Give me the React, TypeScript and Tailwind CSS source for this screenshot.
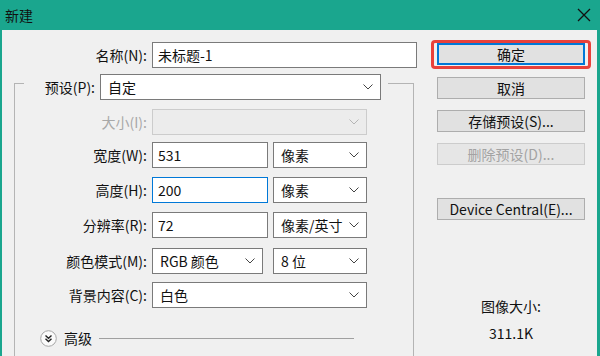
import React from 'react';

const font = { fontFamily: '"Noto Sans CJK SC", "Noto Sans", sans-serif' };

function Chevron({ color = '#444' }: { color?: string }) {
  return (
    <svg width="10" height="6" viewBox="0 0 10 6" className="shrink-0">
      <polyline points="0.5,0.5 5,5 9.5,0.5" fill="none" stroke={color} strokeWidth="1" />
    </svg>
  );
}

function Field({ value, w, focus }: { value: string; w: string; focus?: boolean }) {
  return (
    <div
      className={`${w} h-[26px] bg-white border flex items-center pl-[5px] text-[14px] leading-none ${
        focus ? 'border-[#0078d7]' : 'border-[#7a7a7a]'
      }`}
    >
      {value}
    </div>
  );
}

function Select({ value, w, disabled }: { value: string; w: string; disabled?: boolean }) {
  return (
    <div
      className={`${w} h-[26px] border flex items-center justify-between pl-[7px] pr-[7px] text-[14px] leading-none ${
        disabled ? 'bg-[#ececec] border-[#cccccc]' : 'bg-white border-[#7a7a7a]'
      }`}
    >
      <span>{value}</span>
      <Chevron color={disabled ? '#b5b5b5' : '#444'} />
    </div>
  );
}

function Row({ label, children, mt, disabled }: { label: string; children: React.ReactNode; mt: string; disabled?: boolean }) {
  return (
    <div className={`flex items-center ${mt}`}>
      <div className={`w-[132px] text-right text-[14px] leading-none ${disabled ? 'text-[#a8a8a8]' : 'text-[#111]'}`}>
        {label}
      </div>
      <div className="ml-[5px] flex items-center gap-[5px]">{children}</div>
    </div>
  );
}

function Btn({ label, mt, disabled }: { label: string; mt: string; disabled?: boolean }) {
  return (
    <div
      className={`${mt} mx-[6px] h-[22px] border flex items-center justify-center text-[14px] leading-none ${
        disabled ? 'bg-[#e6e6e6] border-[#cccccc] text-[#a3a3a3]' : 'bg-[#e1e1e1] border-[#adadad] text-[#111]'
      }`}
    >
      {label}
    </div>
  );
}

export default function App() {
  return (
    <div className="w-[600px] h-[356px] bg-[#1aa68e] flex flex-col overflow-hidden text-[#111]" style={font}>
      {/* Title bar */}
      <div className="h-[30px] flex items-center justify-between pl-[5px] pr-[9px] shrink-0">
        <span className="text-[14px] leading-none text-[#111]">新建</span>
        <svg width="14" height="14" viewBox="0 0 14 14">
          <path d="M1 1 L13 13 M13 1 L1 13" stroke="#111" strokeWidth="1.3" />
        </svg>
      </div>

      {/* Body */}
      <div className="flex-1 ml-[2px] mr-[3px] bg-[#f0f0f0] flex">
        {/* Left pane */}
        <div className="w-[418px] flex flex-col">
          <div className="flex items-center mt-[12px]">
            <div className="w-[145px] text-right text-[14px] leading-none">名称(N):</div>
            <div className="ml-[5px]">
              <Field value="未标题-1" w="w-[265px]" />
            </div>
          </div>

          {/* Group box */}
          <div className="mt-[15px] ml-[12px] w-[400px] flex-1 border-l border-t border-r border-[#b4b4b4] flex flex-col">
            <div className="-mt-[11px] ml-[9px] w-[364px] h-[27px] bg-[#f0f0f0] flex items-center justify-end pr-[7px]">
              <span className="text-[14px] leading-none">预设(P):</span>
              <div className="ml-[5px]">
                <Select value="自定" w="w-[281px]" />
              </div>
            </div>

            <Row label="大小(I):" mt="mt-[9px]" disabled>
              <Select value="" w="w-[215px]" disabled />
            </Row>
            <Row label="宽度(W):" mt="mt-[7px]">
              <Field value="531" w="w-[116px]" />
              <Select value="像素" w="w-[94px]" />
            </Row>
            <Row label="高度(H):" mt="mt-[9px]">
              <Field value="200" w="w-[116px]" focus />
              <Select value="像素" w="w-[94px]" />
            </Row>
            <Row label="分辨率(R):" mt="mt-[9px]">
              <Field value="72" w="w-[116px]" />
              <Select value="像素/英寸" w="w-[94px]" />
            </Row>
            <Row label="颜色模式(M):" mt="mt-[10px]">
              <Select value="RGB 颜色" w="w-[111px]" />
              <div className="w-0" />
              <Select value="8 位" w="w-[94px]" />
            </Row>
            <Row label="背景内容(C):" mt="mt-[8px]">
              <Select value="白色" w="w-[215px]" />
            </Row>

            {/* Advanced */}
            <div className="mt-[21px] ml-[25px] flex items-center h-[18px]">
              <svg width="17" height="17" viewBox="0 0 17 17">
                <circle cx="8.5" cy="8.5" r="7.8" fill="#fafafa" stroke="#a6a6a6" strokeWidth="1" />
                <polyline points="5.5,5.5 8.5,8.3 11.5,5.5" fill="none" stroke="#222" strokeWidth="1.4" />
                <polyline points="5.5,8.8 8.5,11.6 11.5,8.8" fill="none" stroke="#222" strokeWidth="1.4" />
              </svg>
              <span className="ml-[7px] text-[14px] leading-none">高级</span>
              <div className="ml-[7px] w-[255px] h-px bg-[#a0a0a0]" />
            </div>
          </div>
        </div>

        {/* Right pane */}
        <div className="ml-[11px] w-[160px] flex flex-col">
          <div className="mt-[10px] border-[3px] border-[#e8413b] rounded-[4px] px-[3px] pb-[1px]">
            <div className="h-[22px] bg-[#e1e1e1] border-2 border-[#0078d7] flex items-center justify-center text-[14px] leading-none">
              确定
            </div>
          </div>
          <Btn label="取消" mt="mt-[8px]" />
          <Btn label="存储预设(S)..." mt="mt-[11px]" />
          <Btn label="删除预设(D)..." mt="mt-[11px]" disabled />
          <Btn label="Device Central(E)..." mt="mt-[33px]" />
          <div className="mt-[79px] flex flex-col items-center text-[14px] leading-none">
            <span>图像大小:</span>
            <span className="mt-[13px]">311.1K</span>
          </div>
        </div>
      </div>
    </div>
  );
}
